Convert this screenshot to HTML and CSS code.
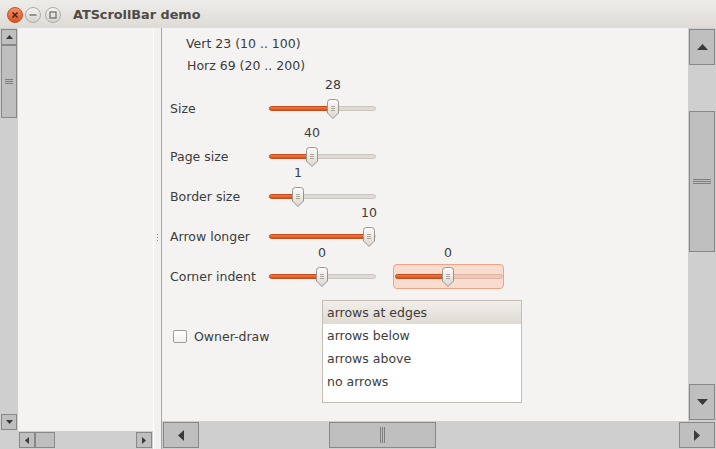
FILE: index.html
```html
<!DOCTYPE html>
<html>
<head>
<meta charset="utf-8">
<link rel="stylesheet" href="styles.css">
</head>
<body>
<svg class="defs" width="0" height="0" aria-hidden="true">
  <defs>
    <linearGradient id="thumbg" x1="0" y1="0" x2="0" y2="1">
      <stop offset="0" stop-color="#fdfcfb"/>
      <stop offset="1" stop-color="#d9d5cf"/>
    </linearGradient>
    <linearGradient id="closeg" x1="0" y1="0" x2="0" y2="1">
      <stop offset="0" stop-color="#f7906a"/>
      <stop offset="1" stop-color="#df4f1c"/>
    </linearGradient>
    <linearGradient id="wbg" x1="0" y1="0" x2="0" y2="1">
      <stop offset="0" stop-color="#f6f5f3"/>
      <stop offset="1" stop-color="#d5d2cc"/>
    </linearGradient>
    <symbol id="thumb" viewBox="0 0 12 20">
      <path d="M0.5 3.5 Q0.5 0.5 3.5 0.5 H8.5 Q11.5 0.5 11.5 3.5 V14 L6 19.5 L0.5 14 Z" fill="url(#thumbg)" stroke="#9a948c"/>
      <path d="M4 7.5 H8 M4 9.5 H8 M4 11.5 H8" stroke="#aaa49c" stroke-width="1"/>
    </symbol>
  </defs>
</svg>

<div class="titlebar">
  <div class="wbtns">
    <svg class="wb" width="16" height="16" viewBox="0 0 16 16"><circle cx="8" cy="8" r="7.5" fill="url(#closeg)" stroke="#c4501f"/><path d="M5.5 5.5 L10.5 10.5 M10.5 5.5 L5.5 10.5" stroke="#3c2a22" stroke-width="1.6"/></svg>
    <svg class="wb" width="16" height="16" viewBox="0 0 16 16"><circle cx="8" cy="8" r="7.5" fill="url(#wbg)" stroke="#aeaaa4"/><path d="M4.5 8 H11.5" stroke="#6a6661" stroke-width="1.3"/></svg>
    <svg class="wb max" width="16" height="16" viewBox="0 0 16 16"><circle cx="8" cy="8" r="7.5" fill="url(#wbg)" stroke="#aeaaa4"/><rect x="5" y="5" width="6" height="6" fill="none" stroke="#6a6661" stroke-width="1.2"/></svg>
  </div>
  <div class="title">ATScrollBar demo</div>
</div>

<div class="main">
  <div class="leftpanel">
    <div class="vsb small">
      <div class="sbtn"><svg width="7" height="4"><polygon points="3.5,0 7,4 0,4"/></svg></div>
      <div class="sthumb" style="height:73px"><span class="hgrip small"></span></div>
      <div class="fill1"></div>
      <div class="sbtn"><svg width="7" height="4"><polygon points="0,0 7,0 3.5,4"/></svg></div>
    </div>
    <div class="lp-content"></div>
    <div class="corner"></div>
    <div class="hsb small">
      <div class="sbtn"><svg width="4" height="7"><polygon points="4,0 4,7 0,3.5"/></svg></div>
      <div class="sthumb" style="width:20px"></div>
      <div class="fill1"></div>
      <div class="sbtn"><svg width="4" height="7"><polygon points="0,0 4,3.5 0,7"/></svg></div>
    </div>
  </div>

  <div class="splitter"><svg width="3" height="7"><rect x="1" y="0" width="1" height="1"/><rect x="1" y="3" width="1" height="1"/><rect x="1" y="6" width="1" height="1"/></svg></div>

  <div class="rightpanel">
    <div class="content">
      <div class="info vert">Vert 23 (10 .. 100)</div>
      <div class="info horz">Horz 69 (20 .. 200)</div>

      <div class="sliders">
        <div class="row">
          <div class="label">Size</div>
          <div class="slider">
            <div class="track"><div class="tfill" style="width:64px"></div></div>
            <svg class="thumb" style="left:58px" width="12" height="20"><use href="#thumb"/></svg>
            <div class="val" style="left:64px">28</div>
          </div>
        </div>
        <div class="row">
          <div class="label">Page size</div>
          <div class="slider">
            <div class="track"><div class="tfill" style="width:43px"></div></div>
            <svg class="thumb" style="left:37px" width="12" height="20"><use href="#thumb"/></svg>
            <div class="val" style="left:43px">40</div>
          </div>
        </div>
        <div class="row">
          <div class="label">Border size</div>
          <div class="slider">
            <div class="track"><div class="tfill" style="width:29px"></div></div>
            <svg class="thumb" style="left:23px" width="12" height="20"><use href="#thumb"/></svg>
            <div class="val" style="left:29px">1</div>
          </div>
        </div>
        <div class="row">
          <div class="label">Arrow longer</div>
          <div class="slider">
            <div class="track"><div class="tfill" style="width:100px"></div></div>
            <svg class="thumb" style="left:94px" width="12" height="20"><use href="#thumb"/></svg>
            <div class="val" style="left:100px">10</div>
          </div>
        </div>
        <div class="row">
          <div class="label">Corner indent</div>
          <div class="slider">
            <div class="track"><div class="tfill" style="width:53px"></div></div>
            <svg class="thumb" style="left:47px" width="12" height="20"><use href="#thumb"/></svg>
            <div class="val" style="left:53px">0</div>
          </div>
          <div class="focusbox">
            <div class="slider wide">
              <div class="track hot"><div class="tfill" style="width:53px"></div></div>
              <svg class="thumb" style="left:47px" width="12" height="20"><use href="#thumb"/></svg>
              <div class="val" style="left:53px">0</div>
            </div>
          </div>
        </div>
      </div>

      <div class="bottomrow">
        <div class="chkwrap">
          <span class="chk"></span>
          <span class="chklabel">Owner-draw</span>
        </div>
        <div class="listbox">
          <div class="item sel">arrows at edges</div>
          <div class="item">arrows below</div>
          <div class="item">arrows above</div>
          <div class="item">no arrows</div>
        </div>
      </div>
    </div>

    <div class="vsb big">
      <div class="sbtn"><svg width="11" height="6"><polygon points="5.5,0 11,6 0,6"/></svg></div>
      <div class="sthumb" style="margin-top:46px;height:141px"><span class="hgrip"></span></div>
      <div class="fill1"></div>
      <div class="sbtn"><svg width="11" height="6"><polygon points="0,0 11,0 5.5,6"/></svg></div>
    </div>

    <div class="hsb big">
      <div class="sbtn"><svg width="6" height="11"><polygon points="6,0 6,11 0,5.5"/></svg></div>
      <div class="sthumb" style="margin-left:130px;width:107px"><span class="vgrip"></span></div>
      <div class="fill1"></div>
      <div class="sbtn"><svg width="6" height="11"><polygon points="0,0 6,5.5 0,11"/></svg></div>
    </div>
  </div>
</div>
</body>
</html>
```

FILE: styles.css
```css
* { box-sizing: border-box; }

html, body {
  margin: 0;
  padding: 0;
}

body {
  width: 716px;
  height: 449px;
  overflow: hidden;
  background: #f2f1f0;
  font-family: "DejaVu Sans", sans-serif;
  font-size: 12.5px;
  color: #3c3c3c;
}

.defs {
  position: absolute;
  width: 0;
  height: 0;
}

/* ---------- title bar ---------- */
.titlebar {
  height: 28px;
  display: flex;
  align-items: center;
  padding-left: 7px;
  padding-top: 1px;
  background: linear-gradient(#eeece9, #dedbd6);
}

.wbtns {
  display: flex;
  gap: 2px;
}

.wb { display: block; }
.wb.max { margin-left: 2px; }

.title {
  margin-left: 12px;
  font-weight: bold;
  font-size: 12.8px;
  color: #4d4b48;
}

/* ---------- main area ---------- */
.main {
  display: flex;
  height: 421px;
}

.leftpanel {
  width: 153px;
  display: grid;
  grid-template-columns: 18px 1fr;
  grid-template-rows: 1fr 18px;
}

.lp-content { background: #f4f3f1; }
.corner { background: #d0d0d0; }

.splitter {
  width: 8px;
  border-left: 1px solid #ffffff;
  display: flex;
  align-items: center;
  justify-content: center;
  padding-bottom: 3px;
}
.splitter svg { fill: #8a8680; display: block; }

.rightpanel {
  flex: 1;
  border-left: 1px solid #a9a59f;
  display: grid;
  grid-template-columns: 1fr 28px;
  grid-template-rows: 1fr 28px;
}

/* ---------- scrollbars ---------- */
.vsb, .hsb {
  background: #cfcfcf;
  display: flex;
  padding: 1px;
}
.vsb { flex-direction: column; }
.hsb { flex-direction: row; }
.hsb.big { grid-column: 1 / 3; }

.fill1 { flex: 1; }

.sbtn, .sthumb {
  background: #bfbfbf;
  border: 1px solid #888888;
  display: flex;
  align-items: center;
  justify-content: center;
  flex: none;
}
.sbtn svg { display: block; fill: #3a3a3a; }

.vsb.small .sbtn { height: 16px; }
.hsb.small .sbtn { width: 16px; }
.vsb.big .sbtn { height: 36px; }
.hsb.big .sbtn { width: 36px; }

.hgrip {
  width: 18px;
  height: 5px;
  border-top: 1px solid #7e7e7e;
  border-bottom: 1px solid #7e7e7e;
  position: relative;
}
.hgrip::after {
  content: "";
  position: absolute;
  left: 0;
  right: 0;
  top: 1px;
  border-top: 1px solid #7e7e7e;
}
.hgrip.small { width: 8px; }

.vgrip {
  width: 5px;
  height: 16px;
  border-left: 1px solid #7e7e7e;
  border-right: 1px solid #7e7e7e;
  position: relative;
}
.vgrip::after {
  content: "";
  position: absolute;
  top: 0;
  bottom: 0;
  left: 1px;
  border-left: 1px solid #7e7e7e;
}

/* ---------- content ---------- */
.content {
  background: #f4f3f1;
  padding-left: 8px;
  padding-top: 5px;
}

.info { line-height: 22px; }
.info.vert { padding-left: 16px; }
.info.horz { padding-left: 17px; }

.sliders {
  margin-top: 19px;
  display: flex;
  flex-direction: column;
  gap: 16px;
}
.sliders .row:first-child { margin-bottom: 8px; }

.row {
  display: flex;
  align-items: center;
  height: 24px;
}

.label { width: 99px; }

.slider {
  position: relative;
  width: 107px;
  height: 24px;
}

.track {
  position: absolute;
  left: 0;
  right: 0;
  top: 10px;
  height: 5px;
  border-radius: 3px;
  background: #dedad4;
  border: 1px solid #cac5be;
}

.tfill {
  position: absolute;
  left: -1px;
  top: -1px;
  bottom: -1px;
  border-radius: 3px;
  background: linear-gradient(#f07a48, #d9521d);
  border: 1px solid #c44c1a;
}

.thumb {
  position: absolute;
  top: 3px;
  display: block;
}

.val {
  position: absolute;
  top: -18px;
  width: 30px;
  margin-left: -15px;
  text-align: center;
  line-height: 14px;
}

.focusbox {
  margin-left: 17px;
  width: 111px;
  height: 25px;
  border: 1px solid #f1a284;
  border-radius: 4px;
  background: #f8dcd0;
  padding-left: 1px;
}
.slider.wide {
  width: 108px;
  height: 23px;
  margin-top: -1px;
}
.track.hot {
  background: #ecc9bb;
  border-color: #e2b3a1;
}

/* ---------- bottom row ---------- */
.bottomrow {
  display: flex;
  margin-top: 12px;
}

.chkwrap {
  width: 152px;
  display: flex;
  align-items: center;
  height: 19px;
  margin-top: 27px;
}

.chk {
  width: 14px;
  height: 13px;
  margin-left: 3px;
  border: 1px solid #a39d95;
  border-radius: 2px;
  background: linear-gradient(#ffffff, #f1efec);
}

.chklabel { margin-left: 7px; }

.listbox {
  width: 200px;
  height: 103px;
  border: 1px solid #c4bdb4;
  background: #ffffff;
}

.item {
  height: 23px;
  line-height: 23px;
  padding-left: 4px;
}
.item.sel {
  background: linear-gradient(#f1eeea, #dfdad3);
}
```
